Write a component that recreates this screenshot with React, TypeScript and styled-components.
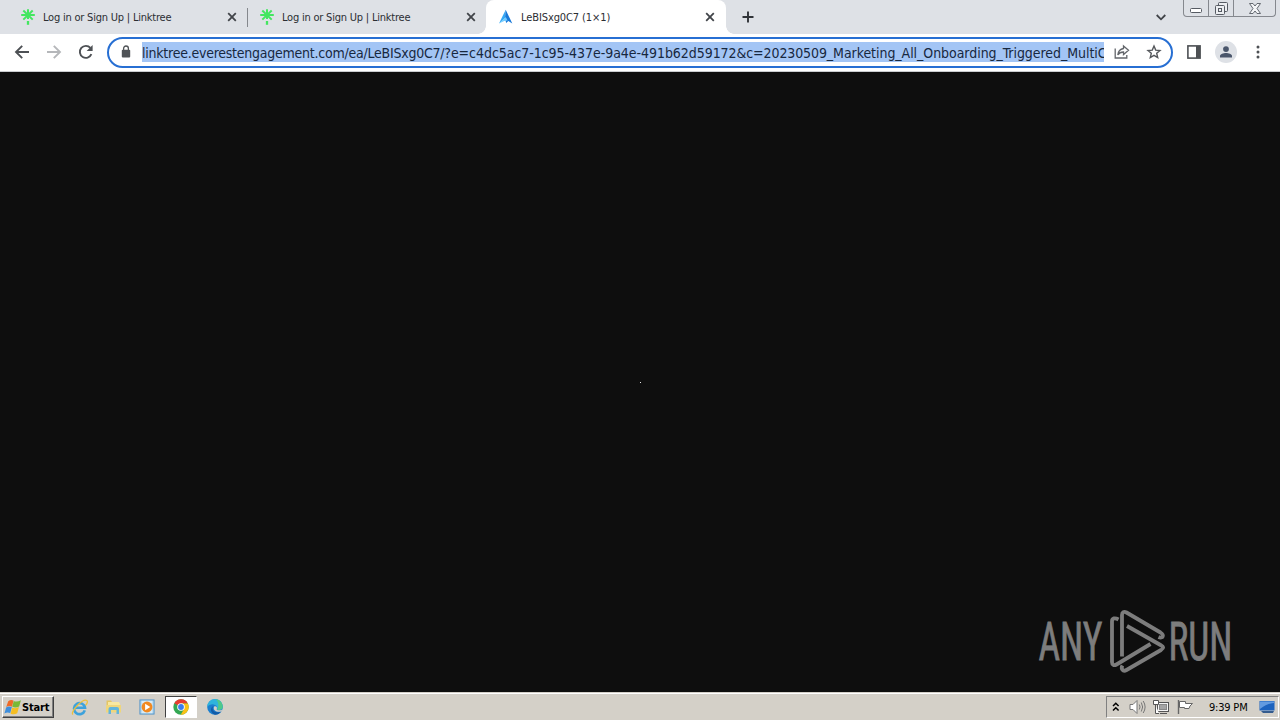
import React from 'react';
import styled, { createGlobalStyle } from 'styled-components';

const GlobalStyle = createGlobalStyle`
    * {
        box-sizing: border-box;
    }
    body {
        margin: 0;
        overflow: hidden;
        background: #0e0e0e;
    }
    svg {
        display: block;
        flex: none;
    }
`;

const Screen = styled.div`
    width: 1280px;
    height: 720px;
    display: flex;
    flex-direction: column;
    overflow: hidden;
    font-family: 'DejaVu Sans Condensed', 'DejaVu Sans', sans-serif;
    font-stretch: condensed;
    color: #2b2e33;
`;

const TabStrip = styled.div`
    height: 34px;
    flex: none;
    display: flex;
    background: #dee1e6;
`;

const Tab = styled.div<{ $active?: boolean; $width: number; $left: number; $right: number }>`
    position: relative;
    width: ${props => props.$width}px;
    height: 34px;
    display: flex;
    align-items: center;
    padding: 0 ${props => props.$right}px 0 ${props => props.$left}px;
    border-radius: 8px 8px 0 0;
    background: ${props => (props.$active ? '#fff' : 'transparent')};

    &::before,
    &::after {
        content: '';
        display: ${props => (props.$active ? 'block' : 'none')};
        position: absolute;
        bottom: 0;
        width: 8px;
        height: 8px;
    }
    &::before {
        left: -8px;
        background: radial-gradient(circle at 0 0, transparent 7.5px, #fff 8px);
    }
    &::after {
        right: -8px;
        background: radial-gradient(circle at 100% 0, transparent 7.5px, #fff 8px);
    }
`;

const Divider = styled.span`
    width: 1px;
    height: 19px;
    margin: 8px 0 0;
    background: #85888d;
`;

const TabTitle = styled.span<{ $spacing: number }>`
    flex: 1;
    margin-left: 7px;
    padding-top: 1px;
    font-size: 11px;
    line-height: 14px;
    white-space: nowrap;
    letter-spacing: ${props => props.$spacing}px;
`;

const Fill = styled.div`
    flex: 1;
`;

const StripButton = styled.div`
    width: 44px;
    display: flex;
    align-items: center;
    justify-content: center;
`;

const WindowControls = styled.div`
    width: 93px;
    height: 17px;
    margin-right: 4px;
    display: flex;
    border: 1px solid #85888e;
    border-top: none;
    border-radius: 0 0 4px 4px;
`;

const ControlButton = styled.div<{ $width: number }>`
    width: ${props => props.$width}px;
    flex: none;
    display: flex;
    align-items: center;
    justify-content: center;

    & + & {
        border-left: 1px solid #85888e;
    }
`;

const Toolbar = styled.div`
    height: 38px;
    flex: none;
    display: flex;
    align-items: center;
    padding: 0 0 2px 12px;
    background: #fff;
    border-bottom: 1px solid #c9cbcf;
`;

const ToolButton = styled.div<{ $width?: number }>`
    width: ${props => props.$width || 32}px;
    height: 28px;
    flex: none;
    display: flex;
    align-items: center;
    justify-content: center;
`;

const Omnibox = styled.div`
    width: 1066px;
    height: 31px;
    margin: 1px 5px 0 11px;
    flex: none;
    display: flex;
    align-items: center;
    padding-left: 12px;
    border: 2px solid #276fd3;
    border-radius: 16px;
    background: #fff;
`;

const Url = styled.div`
    width: 962px;
    height: 20px;
    margin-left: 11px;
    padding-top: 1px;
    overflow: hidden;
    white-space: nowrap;
    font-size: 14px;
    line-height: 20px;
    color: #17283f;
    background: #a3c5f5;
`;

const UrlPart = styled.span<{ $spacing: number }>`
    letter-spacing: ${props => props.$spacing}px;
`;

const Avatar = styled.div`
    width: 22px;
    height: 22px;
    display: flex;
    align-items: center;
    justify-content: center;
    border-radius: 50%;
    background: #dee1e6;
`;

const Viewport = styled.main`
    position: relative;
    flex: 1;
    display: flex;
    align-items: center;
    justify-content: center;
    background: #0e0e0e;
`;

const Pixel = styled.div`
    width: 1px;
    height: 1px;
    background: #e6e6e6;
`;

const Watermark = styled.div`
    position: absolute;
    right: 44px;
    bottom: 19px;

    svg {
        overflow: visible;
    }
`;

const Taskbar = styled.div`
    height: 28px;
    flex: none;
    display: flex;
    align-items: flex-start;
    padding: 3px 1px 0 2px;
    background: #d4d0c8;
    border-top: 1px solid #d4d0c8;
    box-shadow: inset 0 1px 0 #fff;
`;

const StartButton = styled.div`
    width: 52px;
    height: 22px;
    display: flex;
    align-items: center;
    padding-left: 1px;
    font-size: 11px;
    font-weight: 700;
    letter-spacing: -0.15px;
    color: #000;
    border: 1px solid;
    border-color: #fff #404040 #404040 #fff;
    box-shadow: inset -1px -1px 0 #808080;
`;

const Launchers = styled.div`
    display: flex;
    margin-left: 9px;
    gap: 2px;
`;

const Launcher = styled.div<{ $pressed?: boolean }>`
    width: 32px;
    height: 22px;
    display: flex;
    align-items: center;
    justify-content: center;
    border: 1px solid;
    border-color: ${props => (props.$pressed ? '#404040 #fff #fff #404040' : 'transparent')};
    background: ${props => (props.$pressed ? '#fff' : 'transparent')};
`;

const Tray = styled.div`
    width: 173px;
    height: 22px;
    display: flex;
    align-items: center;
    padding-left: 5px;
    border: 1px solid;
    border-color: #808080 #fff #fff #808080;
`;

const TrayIcon = styled.div<{ $gap: number }>`
    margin-right: ${props => props.$gap}px;
`;

const Clock = styled.span`
    width: 50px;
    padding-top: 1px;
    font-size: 11px;
    line-height: 14px;
    letter-spacing: -0.2px;
    white-space: nowrap;
    color: #000;
`;

const LinktreeIcon = () => (
    <svg width='16' height='16' viewBox='0 0 16 16' fill='none' stroke='#43e660' strokeWidth='2'>
        <path d='M8 0.3V10M1.2 6H14.8M3.3 1.5L12.7 10.6M12.7 1.5L3.3 10.6' />
        <path d='M8 12V15.8' strokeWidth='2.3' />
    </svg>
);

const ArrowIcon = () => (
    <svg width='16' height='16' viewBox='0 0 16 16'>
        <path d='M7.7 0.8L1 14.5L7.2 9Z' fill='#35a9f5' />
        <path d='M7.7 0.8L14.3 14.5L10.3 12L8.2 14L7 9.5Z' fill='#1878d8' />
        <path d='M1 14.5L7.8 8L9.6 11.4L6.2 12Z' fill='#70cbff' />
    </svg>
);

const CloseIcon = () => (
    <svg width='10' height='10' viewBox='0 0 10 10' stroke='#414449' strokeWidth='1.8'>
        <path d='M1.2 1.2L8.8 8.8M8.8 1.2L1.2 8.8' />
    </svg>
);

const BackIcon = ({ color = '#4d5054', flip = false }: { color?: string; flip?: boolean }) => (
    <svg
        width='16'
        height='16'
        viewBox='0 0 16 16'
        fill='none'
        stroke={color}
        strokeWidth='1.9'
        transform={flip ? 'scale(-1 1)' : undefined}
    >
        <path d='M15 8H2.4M8.2 1.8L2 8L8.2 14.2' />
    </svg>
);

const ReloadIcon = () => (
    <svg width='16' height='16' viewBox='0 0 16 16'>
        <path d='M13.4 10.2A6 6 0 1 1 12.4 3.9' fill='none' stroke='#4d5054' strokeWidth='1.9' />
        <path d='M14.6 1V7H8.6Z' fill='#4d5054' />
    </svg>
);

const LockIcon = () => (
    <svg width='10' height='14' viewBox='0 0 10 14'>
        <rect x='0.8' y='4.8' width='8.4' height='7.7' rx='1' fill='#505357' />
        <path d='M2.6 5V3.4A2.4 2.4 0 0 1 7.4 3.4V5' fill='none' stroke='#505357' strokeWidth='1.3' />
    </svg>
);

const ShareIcon = () => (
    <svg width='16' height='16' viewBox='0 0 16 16' fill='none' stroke='#63666b' strokeWidth='1.3'>
        <path d='M1.2 4.5V14H12.8V11' />
        <path d='M9.5 2L14.5 6.3L9.5 10.5V8C6.8 8 5 8.9 3.8 11C4.2 7.4 6.2 5 9.5 4.5Z' />
    </svg>
);

const StarIcon = () => (
    <svg width='16' height='16' viewBox='0 0 16 16' fill='none' stroke='#54575b' strokeWidth='1.4'>
        <path d='M8 2.1L9.7 6.1L14 6.5L10.7 9.3L11.7 13.6L8 11.3L4.3 13.6L5.3 9.3L2 6.5L6.3 6.1Z' />
    </svg>
);

const SidePanelIcon = () => (
    <svg width='14' height='14' viewBox='0 0 14 14'>
        <rect x='0.9' y='0.9' width='12.2' height='12.2' fill='none' stroke='#4d5054' strokeWidth='1.6' />
        <path d='M9 1H13V13H9Z' fill='#4d5054' />
    </svg>
);

const PersonIcon = () => (
    <svg width='12' height='12' viewBox='0 0 12 12' fill='#4a566b'>
        <circle cx='6' cy='3.1' r='2.9' />
        <path d='M0 11.6V10C0 8 3.5 7 6 7S12 8 12 10V11.6Z' />
    </svg>
);

const DotsIcon = () => (
    <svg width='4' height='14' viewBox='0 0 4 14' fill='#4d5054'>
        <circle cx='2' cy='2' r='1.5' />
        <circle cx='2' cy='7' r='1.5' />
        <circle cx='2' cy='12' r='1.5' />
    </svg>
);

const AnyRunLogo = () => (
    <svg width='200' height='64' viewBox='0 0 200 64' fontFamily='Roboto, sans-serif' fontSize='53'>
        <g fill='#7d7d7d' stroke='#7d7d7d' strokeWidth='0.8'>
            <text x='2.5' y='51' textLength='64' lengthAdjust='spacingAndGlyphs'>
                ANY
            </text>
            <text x='132.5' y='51' textLength='64' lengthAdjust='spacingAndGlyphs'>
                RUN
            </text>
        </g>
        <g fill='none' stroke='#7d7d7d' strokeWidth='3.8' strokeLinejoin='round'>
            <path d='M82.5 10.5C79 8.5 76 9 76 12.5V53C76 56 78 57 80.5 55.5L114.5 35' />
            <path d='M86 47.5V6C86 3 88 2 90.5 3.5L124.5 23.5C128.5 26 127 30 122.5 28' />
            <path d='M91 17L124.5 36C128 38 128 39 125 41L90.5 61C87 63 84.5 60 86.5 56.5' />
        </g>
    </svg>
);

const StartFlag = () => (
    <svg width='18' height='17' viewBox='0 0 17 16'>
        <path d='M4 2Q6.5 0.2 9 1.5L7.6 7.2Q5 6 2.1 7.5Z' fill='#ee6a28' />
        <path d='M9.2 1.8Q12 3.2 16 1.2L14.3 7Q11.3 8.7 7.8 7.4Z' fill='#79b936' />
        <path d='M2 7.9Q4.5 6.4 7.4 7.6L5.9 13.3Q3.2 12 0.4 13.6Z' fill='#3e8edc' />
        <path d='M7.7 8Q10.8 9.4 14.1 7.6L12.5 13.5Q9.4 15.2 6.2 13.8Z' fill='#f5be22' />
    </svg>
);

const ExplorerIcon = () => (
    <svg width='17' height='17' viewBox='0 0 17 17' fill='none'>
        <path d='M13.8 11.3A5.5 5.5 0 1 1 14 8.8H4' stroke='#3da2dc' strokeWidth='2.6' />
        <path d='M2 15.5C-1.6 13.3 12-1 15.8 1.5C17 2.4 16 5 14.6 6.3' stroke='#edc03b' strokeWidth='1.3' />
    </svg>
);

const FolderIcon = () => (
    <svg width='17' height='16' viewBox='0 0 17 16'>
        <path d='M1.5 1.5H6L7 3H13V13H1.5Z' fill='#e4c564' />
        <path d='M3 3H14L15 5V12H3Z' fill='#f8e8a0' />
        <path d='M1 6H16V13.5H1Z' fill='#efd67c' />
        <path d='M3.5 15V10Q3.5 8 5.5 8H12Q14 8 14 10V15H11.5V11H6V15Z' fill='#62b5dc' />
    </svg>
);

const MediaIcon = () => (
    <svg width='16' height='16' viewBox='0 0 17 17'>
        <rect x='1' y='1' width='15' height='15' fill='#b7d8ee' stroke='#4d91c8' />
        <rect x='3' y='2' width='11' height='13' fill='#d7eaf6' />
        <circle cx='8.5' cy='8.5' r='5.8' fill='#f18920' />
        <path d='M6.5 5V12L12 8.5Z' fill='#fff' />
    </svg>
);

const ChromeIcon = () => (
    <svg width='16' height='16' viewBox='0 0 16 16'>
        <circle cx='8' cy='8' r='7.7' fill='#33a753' />
        <path d='M8 8L1.3 4.2A7.7 7.7 0 0 1 14.8 4.4H8Z' fill='#e63c31' />
        <path d='M8 4.4H14.8A7.7 7.7 0 0 1 7.7 15.7L11.2 9.8Z' fill='#fbc116' />
        <circle cx='8' cy='8' r='3.8' fill='#fff' />
        <circle cx='8' cy='8' r='2.9' fill='#3b7ded' />
    </svg>
);

const EdgeIcon = () => (
    <svg width='16' height='16' viewBox='0 0 16 16'>
        <circle cx='8' cy='8' r='7.8' fill='#1b7fcf' />
        <path d='M0.2 8A7.8 7.8 0 0 1 15.8 7.5C15.9 10.5 12.5 11.5 10 10.5C11 8.5 9.5 5.6 6.5 5.4C4 5.2 1.5 6 0.2 8Z' fill='#2fb4dc' />
        <path d='M9 0.3A7.8 7.8 0 0 1 15.8 8C15.6 10.5 12 11.5 9.9 10.5C12 8 12 4 9 0.3Z' fill='#4fc98a' />
        <path d='M6.3 7C4 11 8 15 14 12.4A7.8 7.8 0 0 1 8 15.8C3.5 14 2.5 9 6.3 7Z' fill='#135ca8' />
        <path d='M7.2 7.4C9 6.5 10.8 8.4 9.7 10C9.2 11.2 12 11.9 15.6 10.4L14.2 12.5C10 13.9 5.2 11 7.2 7.4Z' fill='#d4d0c8' />
    </svg>
);

const ChevronsIcon = () => (
    <svg width='8' height='10' viewBox='0 0 8 10' fill='none' stroke='#000' strokeWidth='1.5'>
        <path d='M1 4L3.8 1.2L6.6 4M1 8.5L3.8 5.7L6.6 8.5' />
    </svg>
);

const SpeakerIcon = () => (
    <svg width='17' height='16' viewBox='0 0 17 16' fill='none' stroke='#777'>
        <path d='M1 5.5H4L8 1.5V14.5L4 10.5H1Z' fill='#fff' />
        <path d='M10.3 5.5Q11.8 8 10.3 10.5M12.3 3.5Q15 8 12.3 12.5M14.2 2Q18 8 14.2 14' />
    </svg>
);

const NetworkIcon = () => (
    <svg width='17' height='16' viewBox='0 0 17 16' fill='none' stroke='#555'>
        <rect x='4.5' y='3.5' width='11' height='9' fill='#f4f4f4' />
        <rect x='6.5' y='5.5' width='7' height='5' fill='#a5a5a5' stroke='#888' />
        <path d='M0.5 1.5H5.5V5.5H0.5ZM2.5 5.5V14.5H6M7 14.5H14' fill='#fff' />
    </svg>
);

const FlagIcon = () => (
    <svg width='17' height='16' viewBox='0 0 17 16' stroke='#666'>
        <path d='M1.5 1V15' strokeWidth='1.4' />
        <path d='M2.5 2.5H8.5V4.5H15.5L13 7L12 9.5H7.5V8.5H2.5Z' fill='#fff' />
    </svg>
);

const DesktopIcon = () => (
    <svg width='16' height='14' viewBox='0 0 16 14'>
        <path d='M0.5 1H15.5V10.5H0.5Z' fill='#1d63be' />
        <path d='M1 1.5H15V3Q7 4 1 9Z' fill='#639be0' />
        <path d='M2 11H15L14 13H4Z' fill='#355c8e' />
    </svg>
);

const App: React.FC = () => {
    return (
        <Screen>
            <GlobalStyle />
            <TabStrip>
                <Tab $width={247} $left={20} $right={10}>
                    <LinktreeIcon />
                    <TabTitle $spacing={-0.21}>Log in or Sign Up | Linktree</TabTitle>
                    <CloseIcon />
                </Tab>
                <Divider />
                <Tab $width={238} $left={11} $right={10}>
                    <LinktreeIcon />
                    <TabTitle $spacing={-0.21}>Log in or Sign Up | Linktree</TabTitle>
                    <CloseIcon />
                </Tab>
                <Tab $width={240} $left={12} $right={11} $active>
                    <ArrowIcon />
                    <TabTitle $spacing={-0.1}>LeBISxg0C7 (1×1)</TabTitle>
                    <CloseIcon />
                </Tab>
                <StripButton>
                    <svg width='12' height='12' viewBox='0 0 12 12' stroke='#303338' strokeWidth='1.9'>
                        <path d='M6 0.5V11.5M0.5 6H11.5' />
                    </svg>
                </StripButton>
                <Fill />
                <StripButton>
                    <svg width='10' height='7' viewBox='0 0 10 7' fill='none' stroke='#414449' strokeWidth='1.8'>
                        <path d='M0.7 1L5 5.3L9.3 1' />
                    </svg>
                </StripButton>
                <WindowControls>
                    <ControlButton $width={24}>
                        <svg width='12' height='10' viewBox='0 0 12 10' fill='#fff' stroke='#565b63'>
                            <rect x='0.5' y='5.5' width='11' height='4' rx='1' />
                        </svg>
                    </ControlButton>
                    <ControlButton $width={25}>
                        <svg width='13' height='13' viewBox='0 0 13 13' fill='#eceef1' stroke='#565b63'>
                            <rect x='3.5' y='0.5' width='9' height='9' rx='1' />
                            <rect x='0.5' y='3.5' width='9' height='9' rx='1' />
                            <rect x='3.5' y='6.5' width='3' height='3' />
                        </svg>
                    </ControlButton>
                    <ControlButton $width={42}>
                        <svg width='12' height='11' viewBox='0 0 12 11' fill='#f4f5f7' stroke='#565b63' strokeWidth='0.9'>
                            <path d='M0.5 0.5H4L6 3L8 0.5H11.5L8 5.5L11.5 10.5H8L6 8L4 10.5H0.5L4 5.5Z' />
                        </svg>
                    </ControlButton>
                </WindowControls>
            </TabStrip>
            <Toolbar>
                <ToolButton $width={20}>
                    <BackIcon />
                </ToolButton>
                <ToolButton $width={44}>
                    <BackIcon color='#b5b7ba' flip />
                </ToolButton>
                <ToolButton $width={20}>
                    <ReloadIcon />
                </ToolButton>
                <Omnibox>
                    <LockIcon />
                    <Url>
                        <UrlPart $spacing={-0.24}>linktree.everestengagement.com/ea/LeBISxg0C7/</UrlPart>
                        <UrlPart $spacing={-0.045}>?e=c4dc5ac7-1c95-437e-9a4e-491b62d59172</UrlPart>
                        <UrlPart $spacing={-0.1}>&c=20230509_</UrlPart>
                        <UrlPart $spacing={-0.05}>Marketing_All_Onboarding_Triggered_MultiCh</UrlPart>
                    </Url>
                    <ToolButton $width={36}>
                        <ShareIcon />
                    </ToolButton>
                    <ToolButton $width={28}>
                        <StarIcon />
                    </ToolButton>
                </Omnibox>
                <ToolButton>
                    <SidePanelIcon />
                </ToolButton>
                <ToolButton>
                    <Avatar>
                        <PersonIcon />
                    </Avatar>
                </ToolButton>
                <ToolButton>
                    <DotsIcon />
                </ToolButton>
            </Toolbar>
            <Viewport>
                <Pixel />
                <Watermark>
                    <AnyRunLogo />
                </Watermark>
            </Viewport>
            <Taskbar>
                <StartButton>
                    <StartFlag />
                    Start
                </StartButton>
                <Launchers>
                    <Launcher>
                        <ExplorerIcon />
                    </Launcher>
                    <Launcher>
                        <FolderIcon />
                    </Launcher>
                    <Launcher>
                        <MediaIcon />
                    </Launcher>
                    <Launcher $pressed>
                        <ChromeIcon />
                    </Launcher>
                    <Launcher>
                        <EdgeIcon />
                    </Launcher>
                </Launchers>
                <Fill />
                <Tray>
                    <TrayIcon $gap={9}>
                        <ChevronsIcon />
                    </TrayIcon>
                    <TrayIcon $gap={7}>
                        <SpeakerIcon />
                    </TrayIcon>
                    <TrayIcon $gap={7}>
                        <NetworkIcon />
                    </TrayIcon>
                    <TrayIcon $gap={15}>
                        <FlagIcon />
                    </TrayIcon>
                    <Clock>9:39 PM</Clock>
                    <DesktopIcon />
                </Tray>
            </Taskbar>
        </Screen>
    );
};

export default App;
